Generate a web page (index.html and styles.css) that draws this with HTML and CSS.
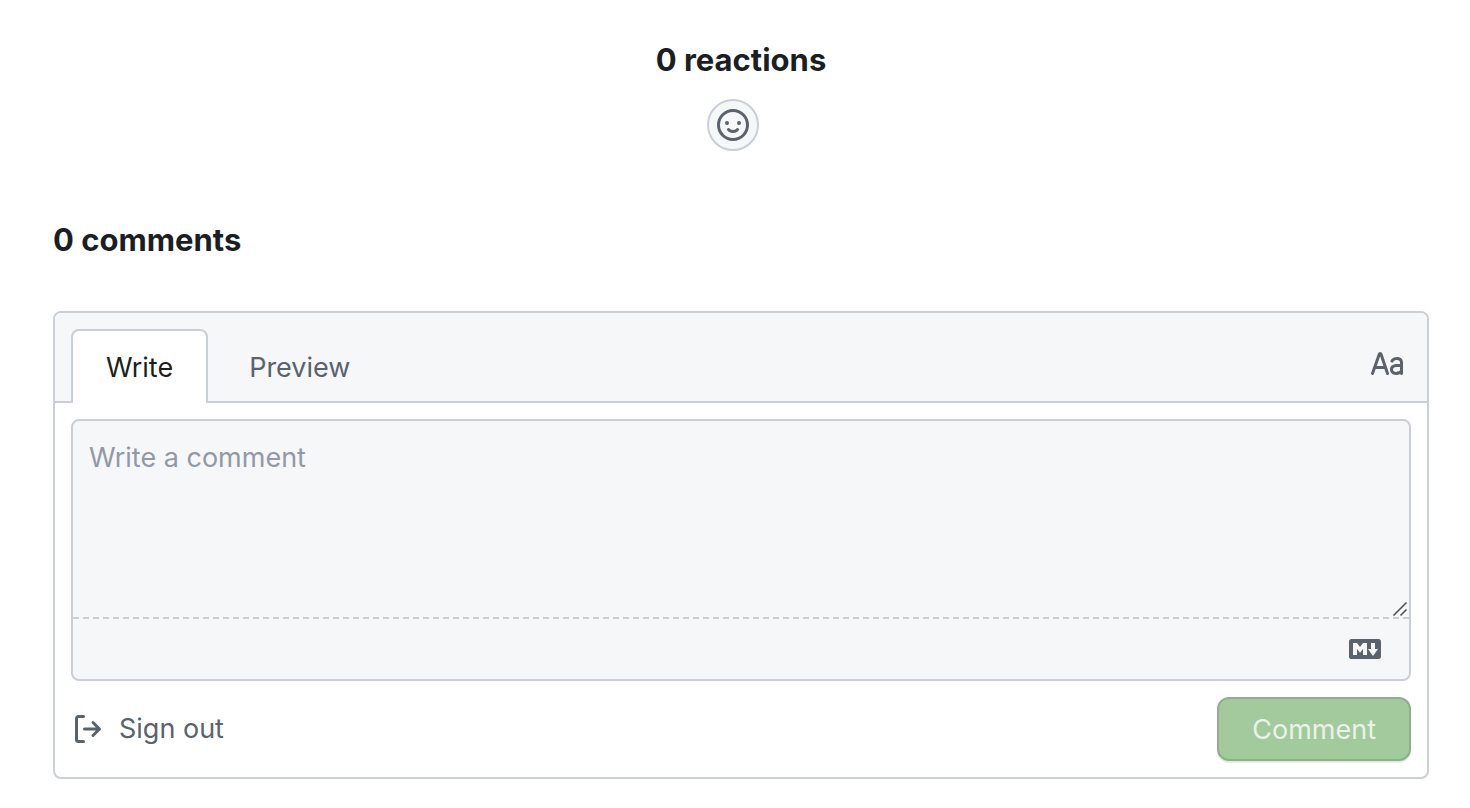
FILE: index.html
```html
<!DOCTYPE html>
<html lang="en">
<head>
<meta charset="utf-8">
<title>Comments</title>
<link rel="stylesheet" href="styles.css">
</head>
<body>
<main class="page">
  <section class="reactions">
    <h2 class="heading">0 reactions</h2>
    <button class="react" type="button" aria-label="Add reactions">
      <svg class="icon" viewBox="0 0 16 16" aria-hidden="true"><path fill-rule="evenodd" d="M1.5 8a6.5 6.5 0 1 1 13 0 6.5 6.5 0 0 1-13 0zM8 0a8 8 0 1 0 0 16A8 8 0 0 0 8 0zM5 8a1 1 0 1 0 0-2 1 1 0 0 0 0 2zm7-1a1 1 0 1 1-2 0 1 1 0 0 1 2 0zM5.32 9.636a.75.75 0 0 1 1.038.175l.007.009c.103.118.22.222.35.31.264.178.683.37 1.285.37.602 0 1.02-.192 1.285-.371.13-.088.247-.192.35-.31l.007-.008a.75.75 0 0 1 1.222.87l-.614-.431c.614.43.614.431.613.431v.001l-.001.002-.002.003-.005.007-.014.019a1.984 1.984 0 0 1-.184.213c-.16.166-.338.316-.53.445-.63.418-1.37.638-2.127.629-.946 0-1.652-.308-2.126-.63a3.331 3.331 0 0 1-.715-.657l-.014-.02-.005-.006-.002-.003v-.002h-.001l.613-.432-.614.43a.75.75 0 0 1 .183-1.044z"/></svg>
    </button>
  </section>

  <h2 class="heading comments-title">0 comments</h2>

  <form class="box">
    <div class="head">
      <div class="tabs">
        <button class="tab active" type="button">Write</button>
        <button class="tab" type="button">Preview</button>
      </div>
      <button class="font-toggle" type="button" aria-label="Enable fixed-width font">
        <svg class="icon" viewBox="0 0 16 16" aria-hidden="true"><path fill-rule="evenodd" d="M6.21 8.5 4.574 3.594 2.857 8.5H6.21zm.5 1.5.829 2.487a.75.75 0 0 0 1.423-.474L5.735 2.332a1.216 1.216 0 0 0-2.302-.018l-3.39 9.688a.75.75 0 0 0 1.415.496L2.332 10H6.71zm3.13-4.358C10.53 4.374 11.87 4 13 4c1.5 0 3 .939 3 2.601v5.649a.75.75 0 0 1-1.448.275C13.995 12.82 13.3 13 12.5 13c-.77 0-1.514-.231-2.078-.709-.577-.488-.922-1.199-.922-2.041 0-.694.265-1.411.887-1.944C11 7.78 11.88 7.5 13 7.5h1.5v-.899c0-.54-.5-1.101-1.5-1.101-.869 0-1.528.282-1.84.858a.75.75 0 1 1-1.32-.716zM14.5 9H13c-.881 0-1.375.22-1.637.444-.253.217-.363.5-.363.806 0 .408.155.697.39.896.249.21.63.354 1.11.354.732 0 1.26-.209 1.588-.449.35-.257.412-.495.412-.551V9z"/></svg>
      </button>
    </div>
    <div class="body">
      <div class="editor">
        <div class="field">
          <textarea class="input" placeholder="Write a comment" aria-label="Write a comment"></textarea>
          <svg class="grip" viewBox="0 0 16 16" aria-hidden="true"><path d="M1.5 14.5 14.5 1.5M8.5 14.5 14.5 8.5"/></svg>
        </div>
        <div class="tools">
          <a class="markdown" href="#" aria-label="Styling with Markdown is supported">
            <svg class="icon" viewBox="0 0 16 16" aria-hidden="true"><path fill-rule="evenodd" d="M14.85 3H1.15C.52 3 0 3.52 0 4.15v7.69C0 12.48.52 13 1.15 13h13.69c.64 0 1.15-.52 1.15-1.15v-7.7C16 3.52 15.48 3 14.85 3zM9 11H7V8L5.5 9.92 4 8v3H2V5h2l1.5 2L7 5h2v6zm2.99.5L9.5 8H11V5h2v3h1.5l-2.51 3.5z"/></svg>
          </a>
        </div>
      </div>
      <div class="actions">
        <button class="signout" type="button">
          <svg class="icon" viewBox="0 0 16 16" aria-hidden="true"><path fill-rule="evenodd" d="M2 2.75C2 1.784 2.784 1 3.75 1h2.5a.75.75 0 0 1 0 1.5h-2.5a.25.25 0 0 0-.25.25v10.5c0 .138.112.25.25.25h2.5a.75.75 0 0 1 0 1.5h-2.5A1.75 1.75 0 0 1 2 13.25Zm10.44 4.5-1.97-1.97a.749.749 0 0 1 1.06-1.06l3.25 3.25a.75.75 0 0 1 0 1.06l-3.25 3.25a.749.749 0 1 1-1.06-1.06l1.97-1.97H6.75a.75.75 0 0 1 0-1.5Z"/></svg>
          <span>Sign out</span>
        </button>
        <button class="submit" type="submit" disabled>Comment</button>
      </div>
    </div>
  </form>
</main>
</body>
</html>
```
FILE: styles.css
```css
* { box-sizing: border-box; }

body {
  margin: 0;
  background: #fff;
  color: #1b1f23;
  font: 27px/42px Inter, "Liberation Sans", sans-serif;
}

button, textarea { font: inherit; }

button {
  margin: 0;
  padding: 0;
  border: 0;
  background: none;
  color: #5a626c;
}

.page { padding: 36px 41px 28px 53px; }

.icon {
  display: block;
  width: 32px;
  height: 32px;
  fill: #5a626c;
}

.heading {
  margin: 0;
  font-size: 31px;
  font-weight: 700;
  line-height: 48px;
}

.reactions {
  display: flex;
  flex-direction: column;
  align-items: center;
  gap: 15px;
}

.react {
  padding: 8px;
  margin-right: 16px;
  border: 2px solid #cacfd7;
  border-radius: 50%;
  background: #f5f7f9;
}

.comments-title { margin: 65px 0 47px; }

.box {
  border: 2px solid #cacfd7;
  border-radius: 8px;
}

.head {
  display: flex;
  justify-content: space-between;
  align-items: center;
  padding: 16px 24px 0 16px;
  border-bottom: 2px solid #cacfd7;
  border-radius: 6px 6px 0 0;
  background: #f5f7f9;
}

.tabs {
  display: flex;
  gap: 6px;
  margin-bottom: -2px;
}

.tab {
  padding: 16px 33px 14px;
  border: 2px solid transparent;
  border-bottom: 0;
  border-radius: 8px 8px 0 0;
}

.tab.active {
  border-color: #cacfd7;
  background: #fff;
  color: #1b1f23;
}

.body { padding: 16px; }

.editor {
  border: 2px solid #cacfd7;
  border-radius: 8px;
  background: #f5f7f9;
}

.field {
  position: relative;
  border-bottom: 2px dashed #cacfd7;
}

.input {
  display: block;
  width: 100%;
  height: 196px;
  padding: 16px;
  border: 0;
  outline: 0;
  resize: none;
  background: transparent;
  color: #1b1f23;
}

.input::placeholder {
  color: #9299a5;
  opacity: 1;
}

.grip {
  position: absolute;
  right: 1px;
  bottom: 0;
  width: 16px;
  height: 16px;
  fill: none;
  stroke: #4a4a4a;
  stroke-width: 1.5;
}

.tools {
  display: flex;
  justify-content: flex-end;
  padding: 14px 28px;
}

.actions {
  display: flex;
  justify-content: space-between;
  align-items: center;
  margin-top: 16px;
}

.signout {
  display: flex;
  align-items: center;
  gap: 16px;
}

.submit {
  padding: 10px 33px 8px;
  border: 2px solid #8bb189;
  border-radius: 12px;
  background: #a2ca9d;
  box-shadow: 0 2px 0 #e9ebea;
  color: #e9f3e8;
}
```
